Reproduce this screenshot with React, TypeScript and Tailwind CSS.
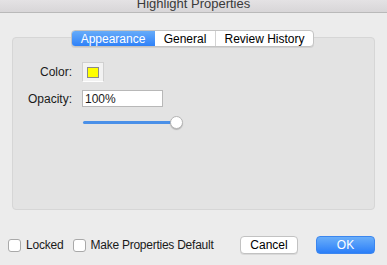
import React from "react";

export default function App() {
  const font = { fontFamily: '"Liberation Sans", Arial, sans-serif' };
  return (
    <div className="w-[387px] h-[265px] bg-[#ececec] overflow-hidden flex flex-col text-[12px] text-[#1a1a1a]" style={font}>
      <div className="h-[13px] shrink-0 bg-gradient-to-b from-[#e4e2e4] to-[#d8d6d8] border-b border-[#b9b9b9] flex justify-center items-end">
        <div className="text-[13px] leading-[13px] text-[#3a3a3a] mb-[2px]">Highlight Properties</div>
      </div>
      <div className="relative mx-[12px] mt-[24px] h-[173px] rounded-[4px] bg-[#e3e3e3] border border-[#d6d6d6] shrink-0">
        <div className="absolute left-[58px] top-[-8px] flex h-[17px] rounded-[4px] border border-[#c3c3c3] bg-white shadow-[0_1px_0_rgba(0,0,0,0.08)] overflow-hidden text-[12px]">
          <div className="w-[84px] flex items-center justify-center text-white bg-gradient-to-b from-[#6aaef9] to-[#2a7ef8] -my-px -ml-px h-[17px] rounded-l-[4px]">Appearance</div>
          <div className="w-[61px] flex items-center justify-center border-r border-[#d3d3d3] text-black">General</div>
          <div className="w-[97px] flex items-center justify-center text-black">Review History</div>
        </div>
        <div className="pt-[24px] pl-[69px] flex flex-col">
          <div className="flex items-center h-[20px]">
            <div className="w-[60px] -ml-[70px] text-right mr-[10px]">Color:</div>
            <div className="w-[22px] h-[20px] bg-[#f2f2f2] border border-[#d0d0d0] border-b-white flex items-center justify-center">
              <div className="w-[12px] h-[11px] bg-[#ffff00] border border-[#8a8a8a]"></div>
            </div>
          </div>
          <div className="flex items-center h-[17px] mt-[8px]">
            <div className="w-[60px] -ml-[70px] text-right mr-[10px]">Opacity:</div>
            <div className="w-[81px] h-[17px] bg-white border border-[#b8b8b8] flex items-center pl-[2px]">100%</div>
          </div>
          <div className="relative mt-[9px] h-[13px] w-[100px] ml-[1px]">
            <div className="absolute left-0 top-[5px] h-[3px] w-[94px] rounded-full bg-[#4a90e8]"></div>
            <div className="absolute left-[87px] top-0 w-[13px] h-[13px] rounded-full bg-white border border-[#b5b5b5] shadow-[0_1px_1px_rgba(0,0,0,0.2)]"></div>
          </div>
        </div>
      </div>
      <div className="flex items-center mt-[26px] h-[18px] pl-[8px] pr-[12px]">
        <div className="w-[13px] h-[13px] rounded-[3px] border border-[#a9a9a9] bg-white"></div>
        <div className="ml-[5px] tracking-[-0.2px]">Locked</div>
        <div className="ml-[9px] w-[13px] h-[13px] rounded-[3px] border border-[#a9a9a9] bg-white"></div>
        <div className="ml-[5px] tracking-[-0.25px]">Make Properties Default</div>
        <div className="flex-1"></div>
        <div className="w-[58px] h-[18px] rounded-[4px] bg-white border border-[#c2c2c2] shadow-[0_1px_0_rgba(0,0,0,0.08)] flex items-center justify-center text-black">Cancel</div>
        <div className="ml-[18px] w-[59px] h-[18px] rounded-[4px] bg-gradient-to-b from-[#6aaef9] to-[#2a7ef8] border border-[#3b86ef] flex items-center justify-center text-white">OK</div>
      </div>
    </div>
  );
}
